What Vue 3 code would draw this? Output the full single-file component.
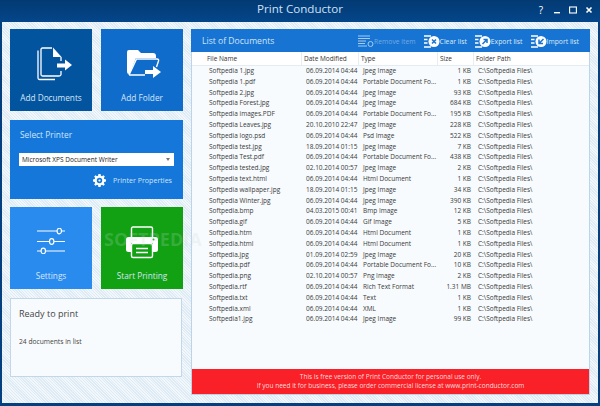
<script setup>
const rows = [
  ['Softpedia 1.jpg', '06.09.2014 04:44', 'Jpeg Image', '1 KB'],
  ['Softpedia 1.pdf', '06.09.2014 04:44', 'Portable Document Fo...', '1 KB'],
  ['Softpedia 2.jpg', '06.09.2014 04:44', 'Jpeg Image', '93 KB'],
  ['Softpedia Forest.jpg', '06.09.2014 04:44', 'Jpeg Image', '684 KB'],
  ['Softpedia images.PDF', '06.09.2014 04:44', 'Portable Document Fo...', '195 KB'],
  ['Softpedia Leaves.jpg', '20.10.2010 22:47', 'Jpeg Image', '228 KB'],
  ['Softpedia logo.psd', '06.09.2014 04:44', 'Psd Image', '522 KB'],
  ['Softpedia test.jpg', '18.09.2014 01:15', 'Jpeg Image', '7 KB'],
  ['Softpedia Test.pdf', '06.09.2014 04:44', 'Portable Document Fo...', '438 KB'],
  ['Softpedia tested.jpg', '02.10.2014 00:57', 'Jpeg Image', '2 KB'],
  ['Softpedia text.html', '06.09.2014 04:44', 'Html Document', '1 KB'],
  ['Softpedia wallpaper.jpg', '18.09.2014 01:15', 'Jpeg Image', '34 KB'],
  ['Softpedia Winter.jpg', '06.09.2014 04:44', 'Jpeg Image', '390 KB'],
  ['Softpedia.bmp', '04.03.2015 00:41', 'Bmp Image', '12 KB'],
  ['Softpedia.gif', '06.09.2014 04:44', 'Gif Image', '5 KB'],
  ['Softpedia.htm', '06.09.2014 04:44', 'Html Document', '1 KB'],
  ['Softpedia.html', '06.09.2014 04:44', 'Html Document', '1 KB'],
  ['Softpedia.jpg', '01.09.2014 02:59', 'Jpeg Image', '20 KB'],
  ['Softpedia.pdf', '06.09.2014 04:44', 'Portable Document Fo...', '10 KB'],
  ['Softpedia.png', '02.10.2014 00:57', 'Png Image', '2 KB'],
  ['Softpedia.rtf', '06.09.2014 04:44', 'Rich Text Format', '1.31 MB'],
  ['Softpedia.txt', '06.09.2014 04:44', 'Text', '1 KB'],
  ['Softpedia.xml', '06.09.2014 04:44', 'XML', '1 KB'],
  ['Softpedia1.jpg', '06.09.2014 04:44', 'Jpeg Image', '99 KB'],
]

const actions = [
  { label: 'Clear list', mark: 'x' },
  { label: 'Export list', mark: 'out' },
  { label: 'Import list', mark: 'in' },
]
</script>

<template>
  <div class="window">
    <header class="titlebar">
      <span class="title">Print Conductor</span>
      <div class="window-btns">
        <span class="help">?</span>
        <svg width="8" height="8" viewBox="0 0 8 8"><rect x="1" y="6" width="6" height="1.4" fill="#fff" /></svg>
        <svg width="8" height="8" viewBox="0 0 8 8"><rect x=".6" y="1" width="6.8" height="6" fill="none" stroke="#fff" stroke-width="1.1" /></svg>
        <svg width="8" height="8" viewBox="0 0 8 8"><path d="M1.5 1.5l5 5M6.5 1.5l-5 5" stroke="#fff" stroke-width="1.6" /></svg>
      </div>
    </header>

    <main class="body">
      <aside class="side">
        <div class="tile tile--dark">
          <svg class="icon-docs" width="36" height="34" viewBox="0 0 36 34" fill="none" stroke="#fff" stroke-width="1.3">
            <path d="M1 3.5V31Q1 32.5 2.5 32.5H18" />
            <path d="M15 1H5.5Q4 1 4 2.5V27.5Q4 29 5.5 29H22Q24 29 24 27.5V24M24 10V14" />
            <path d="M16 .5L24.5 10H16Z" fill="#fff" stroke="none" />
            <path d="M20 16.5H28V12.5L35 18L28 23.5V20.5H20Z" fill="#fff" stroke="none" />
          </svg>
          <span class="tile-label">Add Documents</span>
        </div>
        <div class="tile tile--mid">
          <svg class="icon-folder" width="35" height="30" viewBox="0 0 35 30" fill="none">
            <path d="M1 3Q1 1 3 1H12L15 4H27Q30 4 30 7V9H10L3.5 25H3Q1 25 1 23Z" fill="#fff" />
            <path d="M3 26L10.5 10H31Q33 10 32.5 12L30.5 18M3 26H19" stroke="#fff" stroke-width="1.4" />
            <path d="M19 21H27V17L35 23L27 29V25H19Z" fill="#fff" />
          </svg>
          <span class="tile-label">Add Folder</span>
        </div>

        <section class="printer">
          <h2 class="printer-title">Select Printer</h2>
          <div class="select">
            <span>Microsoft XPS Document Writer</span>
            <svg width="4" height="3" viewBox="0 0 4 3"><path d="M0 0h4L2 3Z" fill="#777" /></svg>
          </div>
          <div class="props">
            <svg width="13" height="13" viewBox="0 0 24 24" fill="#fff">
              <path fill-rule="evenodd" d="M10 0h4l.6 3.2 2 .8L19.3 2.2l2.5 2.5L20 7.4l.8 2L24 10v4l-3.2.6-.8 2 1.800 2.700-2.500 2.500-2.700-1.800-2 .8L14 24h-4l-.6-3.200-2-.8-2.700 1.800-2.500-2.500L4 16.600l-.8-2L0 14v-4l3.200-.6.8-2-1.800-2.700 2.500-2.500L7.400 4l2-.8ZM12 7a5 5 0 1 0 0 10 5 5 0 0 0 0-10Zm0 3a2 2 0 1 1 0 4 2 2 0 0 1 0-4Z" />
            </svg>
            <span>Printer Properties</span>
          </div>
        </section>

        <div class="tile tile--light">
          <svg class="icon-sliders" width="28" height="26" viewBox="0 0 28 26" fill="none" stroke="#fff" stroke-width="1.2">
            <path d="M0 3H20M25 3H28M0 13.5H12M17 13.5H28M0 23H4M9 23H28" />
            <ellipse cx="22.3" cy="3" rx="2.2" ry="2.8" />
            <ellipse cx="14.7" cy="13.5" rx="2.2" ry="2.8" />
            <ellipse cx="6.3" cy="23" rx="2.2" ry="2.8" />
          </svg>
          <span class="tile-label">Settings</span>
        </div>
        <div class="tile tile--green">
          <svg class="icon-printer" width="32" height="33" viewBox="0 0 32 33" fill="none">
            <path d="M5.5 11V2.500Q5.500 1 7 1H25Q26.500 1 26.500 2.500V11" stroke="#fff" stroke-width="1.4" />
            <path d="M2.500 11H29.500Q32 11 32 13.500V24Q32 26 29.500 26H27V17H5V26H2.500Q0 26 0 24V13.500Q0 11 2.500 11Z" fill="#fff" />
            <rect x="5.5" y="17.5" width="21" height="14" rx="1.5" fill="#12a112" stroke="#fff" stroke-width="1.4" />
            <path d="M10 22.500H22M10 26.500H22" stroke="#fff" stroke-width="1.3" />
            <circle cx="27.5" cy="13.5" r="1" fill="#12a112" />
          </svg>
          <span class="tile-label">Start Printing</span>
        </div>

        <section class="status">
          <p class="status-title">Ready to print</p>
          <p class="status-count">24 documents in list</p>
        </section>
      </aside>

      <section class="panel">
        <div class="panel-head">
          <h2 class="panel-title">List of Documents</h2>
          <div class="actions">
            <span class="action action--off">
              <svg width="16" height="13" viewBox="0 0 16 13" fill="none" stroke="#a5cbf0" stroke-width="1">
                <path d="M0 1h12M0 3.500h12M0 6h8M0 8.500h7M0 11h9" />
                <circle cx="12.5" cy="9" r="2.5" />
              </svg>
              Remove item
            </span>
            <span v-for="a in actions" :key="a.label" class="action">
              <svg width="16" height="13" viewBox="0 0 16 13" fill="none">
                <path d="M0 1h7M0 4.500h3.500M0 8h3.500M0 12h7" stroke="#fff" stroke-width="1.3" />
                <circle cx="10" cy="6.5" r="5.5" fill="#fff" />
                <path v-if="a.mark === 'x'" d="M8 4.500l4 4M12 4.500l-4 4" stroke="#1874d2" stroke-width="1.5" />
                <path v-else-if="a.mark === 'out'" d="M7.500 9l4-4M8.500 4.500h3.500V8" stroke="#1874d2" stroke-width="1.5" />
                <path v-else d="M12.500 4l-4 4M12 8.500H8V4.500" stroke="#1874d2" stroke-width="1.5" />
              </svg>
              {{ a.label }}
            </span>
          </div>
        </div>

        <div class="grid grid--head">
          <span>File Name</span>
          <span>Date Modified</span>
          <span>Type</span>
          <span>Size</span>
          <span>Folder Path</span>
        </div>

        <div class="list">
          <div v-for="r in rows" :key="r[0] + r[3]" class="grid grid--row">
            <span>{{ r[0] }}</span>
            <span>{{ r[1] }}</span>
            <span>{{ r[2] }}</span>
            <span class="size">{{ r[3] }}</span>
            <span>C:\Softpedia Files\</span>
          </div>
        </div>

        <div class="notice">
          <p>This is free version of Print Conductor for personal use only.</p>
          <p>If you need it for business, please order commercial license at www.print-conductor.com</p>
        </div>
      </section>
    </main>

    <span class="watermark">SOFTPEDIA</span>
  </div>
</template>

<style>
html,
body {
  margin: 0;
  background: #03396f;
}
</style>

<style scoped>
.window {
  position: relative;
  width: 600px;
  height: 406px;
  display: flex;
  flex-direction: column;
  overflow: hidden;
  background: #04407f;
  font-family: 'Open Sans', 'Liberation Sans', sans-serif;
  color: #3a3a3a;
}

.titlebar {
  flex: 0 0 22px;
  box-sizing: border-box;
  padding-bottom: 5px;
  position: relative;
  display: flex;
  align-items: center;
  justify-content: center;
  background: linear-gradient(#033a73, #04468a);
}

.title {
  font-size: 11.6px;
  color: #cfe2f5;
}

.window-btns {
  position: absolute;
  right: 7px;
  top: 6px;
  display: flex;
  align-items: center;
  gap: 8px;
}

.help {
  width: 8px;
  text-align: center;
  font-size: 10px;
  line-height: 8px;
  color: #fff;
}

.body {
  flex: 1;
  margin: 0 2px 3px;
  padding: 7px 8px 8px;
  display: flex;
  gap: 8px;
  min-height: 0;
  background-color: #e6f0f7;
  background-image: repeating-linear-gradient(45deg, #f1f7fb 0 1px, #dfebf4 1px 2px);
}

.side {
  flex: 0 0 173px;
  display: grid;
  grid-template-columns: 82px 82px;
  grid-template-rows: 82px 79px 82px 79px;
  column-gap: 9px;
  row-gap: 8.5px;
  align-content: start;
}

.tile {
  display: flex;
  flex-direction: column;
  align-items: flex-start;
  color: #d6e6f7;
  font-size: 8.25px;
}

.tile-label {
  margin-top: auto;
  margin-bottom: 8px;
  align-self: center;
}

.icon-docs {
  margin: 18px 0 0 27px;
}

.icon-folder {
  margin: 20px 0 0 25px;
}

.icon-sliders {
  margin: 21px 0 0 27px;
}

.icon-printer {
  margin: 19px 0 0 25px;
}

.tile--dark {
  background: #03549f;
}

.tile--mid {
  background: #0f6ccb;
}

.tile--light {
  background: #2a8bee;
}

.tile--green {
  background: #12a112;
}

.printer {
  grid-column: 1 / 3;
  background: #1577d9;
  padding: 0 8px;
  box-sizing: border-box;
}

.printer-title {
  margin: 9px 2px 0;
  font-size: 8.4px;
  line-height: 12px;
  font-weight: 400;
  color: #cfe5fb;
}

.select {
  margin: 12px 1px 0;
  height: 13px;
  padding: 0 4px 0 3px;
  display: flex;
  align-items: center;
  justify-content: space-between;
  background: #fff;
  font-size: 6.5px;
  color: #222;
}

.props {
  margin-top: 8px;
  display: flex;
  align-items: center;
  justify-content: flex-end;
  gap: 7px;
  padding-right: 3px;
  font-size: 7.1px;
  color: #cfe5fb;
}

.status {
  grid-column: 1 / 3;
  background: #f8fbfd;
  border: 1px solid #c3d7ea;
  box-sizing: border-box;
  width: 172px;
}

.status p {
  margin: 0;
}

.status-title {
  padding: 8px 8px 0;
  font-size: 9px;
  line-height: 13px;
  color: #444;
}

.status-count {
  padding: 17px 8px 0;
  font-size: 6.7px;
  line-height: 9px;
  color: #444;
}

.panel {
  width: 399px;
  height: 366px;
  display: flex;
  flex-direction: column;
  box-sizing: border-box;
  border: 1px solid #bcd4ea;
  border-top: 0;
  background: #f7fbfd;
}

.panel-head {
  flex: 0 0 23px;
  margin: 0 -1px;
  display: flex;
  align-items: center;
  justify-content: space-between;
  padding: 1px 11px 0;
  box-sizing: border-box;
  background: #1874d2;
}

.panel-title {
  margin: 0;
  font-size: 8.6px;
  font-weight: 400;
  color: #cfe5fb;
}

.actions {
  display: flex;
  align-items: center;
  gap: 8px;
}

.action {
  display: flex;
  align-items: center;
  font-size: 6.8px;
  color: #dcebf9;
}

.action--off {
  color: #70aae6;
}

.grid {
  display: grid;
  grid-template-columns: 110px 57px 79px 36px 1fr;
}

.grid--head {
  flex: 0 0 13px;
  align-items: center;
  font-size: 6.5px;
  background: #fff;
  border-bottom: 1px solid #e3ecf3;
  color: #333;
}

.grid--head span {
  border-right: 1px solid #e6edf3;
  line-height: 13px;
  padding-left: 2px;
}

.grid--head span:first-child {
  padding-left: 15px;
}

.grid--head span:last-child {
  border-right: 0;
}

.list {
  flex: 1;
}

.grid--row {
  height: 10.8px;
  line-height: 10.8px;
  font-size: 6.5px;
  white-space: nowrap;
}

.grid--row span {
  padding-left: 4px;
}

.grid--row span:first-child {
  padding-left: 17px;
}

.grid--row .size {
  text-align: right;
  padding: 0 3px 0 0;
}

.notice {
  flex: 0 0 25px;
  background: #fa2027;
  color: #fbdcdc;
  text-align: center;
  font-size: 6.5px;
  line-height: 8.5px;
  padding-top: 4px;
  box-sizing: border-box;
}

.notice p {
  margin: 0;
}

.watermark {
  position: absolute;
  left: 104px;
  top: 227px;
  font-size: 18px;
  font-weight: 700;
  color: rgba(200, 215, 220, 0.22);
  pointer-events: none;
}
</style>
